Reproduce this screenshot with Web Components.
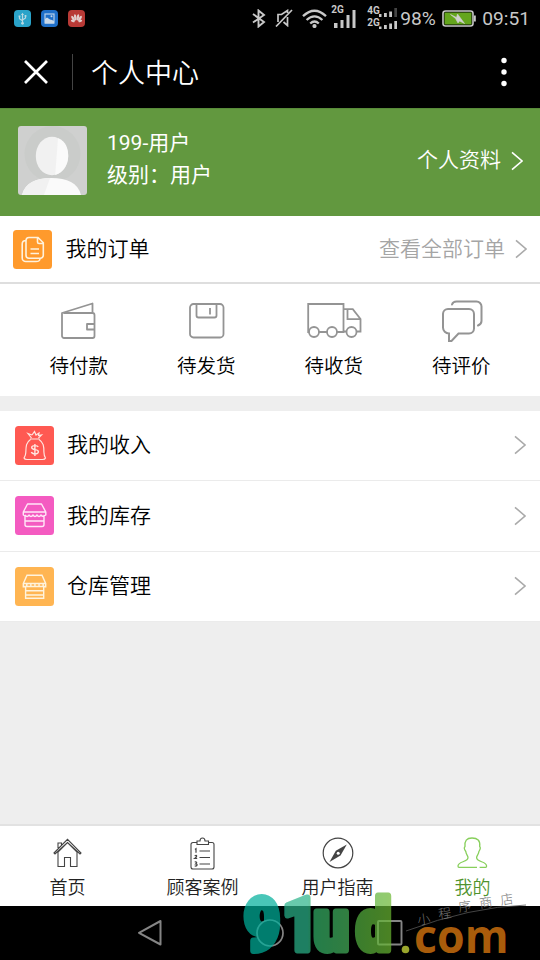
<!DOCTYPE html>
<html lang="zh-CN">
<head>
<meta charset="utf-8">
<title>个人中心</title>
<style>
html,body{margin:0;padding:0}
body{width:540px;height:960px;overflow:hidden;background:#eee;font-family:Roboto,"Noto Sans CJK SC",sans-serif;color:#000}
</style>
</head>
<body>
<member-page></member-page>
<script>
const define = (name, html) => customElements.define(name, class extends HTMLElement {
  connectedCallback() {
    if (this.shadowRoot) return;
    const t = document.createElement('template');
    t.innerHTML = typeof html === 'function' ? html(this) : html;
    this.attachShadow({mode: 'open'}).append(t.content.cloneNode(true));
  }
});

// name: [width, height, markup]
const ICONS = {
  usb: [17,17,'<rect width="17" height="17" rx="4" fill="#2aa3c9"/><g stroke="#b9d9e2" fill="none" stroke-width="1.2"><path d="M8.5 4v9M5.5 6.5v2.3l3 2M11.5 6v2l-3 2"/></g><circle cx="8.5" cy="13.3" r="1.4" fill="#b9d9e2"/><path d="M7 5l1.500-2.300L10 5zM4.600 5.500h1.800v1.800H4.600zM10.600 5h1.800v1.800h-1.800z" fill="#b9d9e2"/>'],
  photo: [17,17,'<rect width="17" height="17" rx="4" fill="#1f6fc8"/><rect x="4" y="4" width="9" height="9" fill="none" stroke="#b7cfe8" stroke-width="1.200"/><path d="M4 9l2-1.500 3 2 2 .5 2 1v2.500H4z" fill="#c8d8e8"/><circle cx="10.500" cy="6.300" r="1" fill="#c8d8e8"/>'],
  flower: [17,17,'<rect width="17" height="17" rx="4" fill="#b83a36"/><g fill="#e2cfce"><ellipse cx="7.300" cy="7.400" rx="1.200" ry="3.200" transform="rotate(-8 7.300 7.400)"/><ellipse cx="9.900" cy="7.400" rx="1.200" ry="3.200" transform="rotate(8 9.900 7.400)"/><ellipse cx="5.100" cy="8.500" rx="1.200" ry="3" transform="rotate(-33 5.100 8.500)"/><ellipse cx="12" cy="8.500" rx="1.200" ry="3" transform="rotate(33 12 8.500)"/><ellipse cx="4.800" cy="11" rx="1" ry="2" transform="rotate(-68 4.800 11)"/><ellipse cx="12.300" cy="11" rx="1" ry="2" transform="rotate(68 12.300 11)"/></g>'],
  bluetooth: [14,19,'<path d="M1 5l11 8-5.500 4.500V1.500L12 6 1 13.500" fill="none" stroke="#c8c8c8" stroke-width="1.900"/>'],
  mute: [18,18,'<g fill="none" stroke="#c8c8c8" stroke-width="1.700"><path d="M3 13V5.500h3.500L12.500 1.500V4M12.500 8v8.500l-4-3.500M1 17.500L17 1"/></g>'],
  wifi: [25,19,'<g fill="none" stroke="#c8c8c8" stroke-width="2.300"><path d="M1 7.200Q12.500-3.800 24 7.200M4.600 11Q12.500 3.800 20.400 11M8.200 14.500Q12.500 10.600 16.800 14.500"/></g><circle cx="12.500" cy="17" r="2.100" fill="#c8c8c8"/>'],
  signal: [22,19,'<path d="M0 14h3.500v5H0zM6.500 11H9.500v8H6.500zM12.500 6H15.500v13H12.500zM18.500 1H21.500v18H18.500z" fill="#c8c8c8"/>'],
  dual: [19,22,'<path d="M0 6h2.500v3H0zM5 5h2.800v4H5zM10.200 3.500h2.800v5.500h-2.800zM0 18.500h2.500V21H0zM5 17h2.800v4H5zM10.200 15.500h2.800V21h-2.800zM15.300 13h2.700v8h-2.700z" fill="#c8c8c8"/><path d="M15.300 0h2.700v9h-2.700z" fill="#444"/>'],
  battery: [34,17,'<rect x="1" y="1" width="30" height="15" rx="2.500" fill="#000" stroke="#c8c8c8" stroke-width="1.600"/><rect x="2.500" y="2.500" width="27" height="12" fill="#64a51d"/><path d="M32 5.500h1.800v6H32z" fill="#c8c8c8"/><path d="M8.500 4.500l6 3L15.500 4l7 9.500-5-2.500-1.500 2-2.500-4.500z" fill="#d0d0d0" stroke="#d0d0d0" stroke-width=".6"/>'],
  close: [24,24,'<path d="M1 1l22 22M23 1L1 23" stroke="#fff" stroke-width="2.700"/>'],
  more: [6,30,'<g fill="#fff"><circle cx="3" cy="3.500" r="2.700"/><circle cx="3" cy="15" r="2.700"/><circle cx="3" cy="26.500" r="2.700"/></g>'],
  chevron: [12,20,'<path d="M1 1.300L11 10 1 18.700" fill="none" stroke="currentColor" stroke-width="1.600"/>'],
  avatar: [69,69,'<defs><clipPath id="c"><rect width="69" height="69" rx="3"/></clipPath></defs><g clip-path="url(#c)"><rect width="69" height="69" fill="#cfd0cf"/><circle cx="34.500" cy="28" r="28" fill="#caccca"/><ellipse cx="34" cy="30" rx="16.200" ry="19.300" fill="#f1f1f1"/><path d="M40 12.200C48 15 50.200 23 50.200 30c0 9-6 17.300-13 19z" fill="#fafafa"/><path d="M4 69c3-12 14-17 29.500-17S60 57 63 69z" fill="#fafafa"/><path d="M4 69c3-12 14-17 28-17l-6 17z" fill="#f1f1f1"/></g>'],
  orders: [39,39,'<rect width="39" height="39" rx="3.500" fill="#ff9a2c"/><g fill="none" stroke="#fff2dd" stroke-width="1.600"><path d="M16 7.500H25l5.300 5.300v12.400a3 3 0 0 1-3 3H16a3 3 0 0 1-3-3V10.500a3 3 0 0 1 3-3zM24.500 8v4a1.500 1.500 0 0 0 1.500 1.500h4M13 10.500c-3 0-3.800 1-3.800 3.500v14a3.500 3.500 0 0 0 3.500 3.500H23c3 0 4-.700 4-3.500M17.500 19h8.500M17.500 23.500h8.500"/></g>'],
  income: [39,39,'<rect width="39" height="39" rx="3.500" fill="#ff5952"/><g fill="none" stroke="#ffe5df" stroke-width="1.200"><path d="M16.500 12l-3.500-4.500 4 1.500M17 9l2.500-3.500L21 9l3-2-.5 2.500 3-.5-3 3M15 13h9.500M15.500 13.500c-4.500 3-4.500 7-4.700 13-.1 3-1 4-1.800 5.500.5 1.500 1.500 1.500 3 1.500h15.500c1.500 0 2.500 0 3-1.500-1-1.500-1.500-3-1.600-6 0-6-.4-9.500-4.900-12.500"/><path d="M19.900 18v12M23.200 20.900c-.6-1.500-6.500-2-6.500.5 0 3 6.700 1.500 6.700 4.300 0 3-6.300 2.600-7 .3" stroke-width="1.400"/></g>'],
  stock: [39,39,'<rect width="39" height="39" rx="3.500" fill="#f45bc1"/><g fill="none" stroke="#ffe8f7" stroke-width="1.400" stroke-linejoin="round"><path d="M8.300 16L12.500 8h14l4.300 8v3l-1.800 1v8.500a2 2 0 0 1-2 2H12a2 2 0 0 1-2-2V20l-1.700-1zM8.300 16h22.500M10 19q2.200 3 4 0 2 3 4 0 2 3 4 0 2 3 4 0 2 2.500 3.500 0M10 25h19"/></g>'],
  depot: [39,39,'<rect width="39" height="39" rx="3.500" fill="#ffb552"/><g fill="none" stroke="#fff3dd" stroke-width="1.400"><path d="M8.300 16.500L12 8.300h15l3.700 8.200v3.200H28.700v11.500H10.600V19.700H8.300zM8.300 16.500h22.400M8.300 19.500h22.400M10.600 23.700h18M10.600 28h18"/><path d="M11 18h19" stroke-width="3" stroke-dasharray="1.500 2.600"/></g>'],
  wallet: [36,38,'<g fill="none" stroke="#949494" stroke-width="1.800" stroke-linejoin="round"><path d="M2.500 11h29a2 2 0 0 1 2 2V34a2 2 0 0 1-2 2H3a2 2 0 0 1-2-2V11L31.500 1.500V11M33.500 22H26v5.500h7.500"/></g>'],
  disk: [36,36,'<g fill="none" stroke="#949494" stroke-width="1.800"><rect x="1" y="1" width="33.500" height="33.500" rx="3.500"/><path d="M7.500 1v11.500a2 2 0 0 0 2 2h16a2 2 0 0 0 2-2V1M21 5v6.500"/></g>'],
  truck: [55,36,'<g fill="none" stroke="#949494" stroke-width="1.800"><path d="M2.500 29H1.200V1H36.500v28H30M20 29H12M36.500 6.200h9.300L53.500 16v12.500h-3.500M40 28.500h-4M40.500 6.200v10h13"/><circle cx="7" cy="29" r="5"/><circle cx="25" cy="29" r="5"/><circle cx="44.500" cy="29" r="5"/></g>'],
  comment: [42,42,'<g fill="none" stroke="#949494" stroke-width="2" stroke-linecap="round"><path d="M7 9h21a5 5 0 0 1 5 5v14.500a5 5 0 0 1-5 5H17.500L10.500 41H8v-7.500a6 6 0 0 1-6-6V14a5 5 0 0 1 5-5zM11 4.500Q12 1.500 15.500 1.500h20a5 5 0 0 1 5 5V21q0 3-3.500 4.500"/></g>'],
  home: [29,30,'<g fill="none" stroke="#444" stroke-width="1.100"><path d="M1 15L14.500 1.300 28 15l-1 1L14.500 4.500 2 16zM5 10V5h3.500v2M5 14v14.500h6.500v-9h6v9H24V14L14.500 4.500z"/></g>'],
  clipboard: [25,33,'<g fill="none" stroke="#444" stroke-width="1.100"><path d="M7 5.500H3a2 2 0 0 0-2 2v22.500a2 2 0 0 0 2 2h19a2 2 0 0 0 2-2V7.500a2 2 0 0 0-2-2h-4M7 7.500h11.500V4H15q0-3-2.500-3T10 4H7zM9.500 14H20M9.500 20.500H20M9.500 27H20"/><g stroke-width="1.200"><path d="M5 12.500l1-.8v4M4.700 19q1.800-1.500 2 0 0 1-2 2.500h2.500M4.700 25q2.200-.5 2 1l-1 1q2 0 1.200 1.500-1 1-2.200.3"/></g></g>'],
  compass: [32,32,'<circle cx="16" cy="16" r="14.800" fill="none" stroke="#444" stroke-width="1.200"/><path d="M24.800 7.500L18.500 18.500 7.500 25l6.300-11.200z" fill="#444"/><circle cx="16.200" cy="16.200" r="1.500" fill="#fff"/>'],
  person: [31,32,'<path d="M20 30.300H2Q1 30.300 1 29c0-5 10-3.500 10-8.500 0-2-2-3-2.200-6-1.500-2-1.800-4-.8-5C7.500 4 9.500 1 15 1s8.500 2.500 7.700 8.500c1 1 .5 3-.8 5-.2 3-2.300 4-2.300 6 0 5 10 3.500 10 8.500q0 1.300-1 1.300h-6" fill="none" stroke="#87cf5b" stroke-width="1.300"/>'],
  back: [26,28,'<path d="M23.500 2v23.500L2 13.800z" fill="none" stroke="#858585" stroke-width="2" stroke-linejoin="round"/>'],
  circle: [28,28,'<circle cx="14" cy="14" r="13" fill="none" stroke="#858585" stroke-width="1.700"/>'],
  square: [26,26,'<rect x="1" y="1" width="23.500" height="23.500" rx="1" fill="none" stroke="#858585" stroke-width="1.900"/>']
};
define('ui-icon', el => {
  const [w, h, body] = ICONS[el.getAttribute('name')];
  return `<style>:host{display:block;flex:none;width:${w}px;height:${h}px}svg{display:block}</style><svg width="${w}" height="${h}" viewBox="0 0 ${w} ${h}">${body}</svg>`;
});

define('status-bar', `<style>
:host{display:flex;height:36px;background:#000;color:#c8c8c8;align-items:center;padding:0 10px 0 14px;box-sizing:border-box;font-size:19.200px}
.apps{display:flex;gap:10px;margin-right:auto}
.sys{display:flex;align-items:center}
.net{font-size:10px;line-height:10px;font-weight:700}
</style>
<div class="apps"><ui-icon name="usb"></ui-icon><ui-icon name="photo"></ui-icon><ui-icon name="flower"></ui-icon></div>
<div class="sys"><ui-icon name="bluetooth"></ui-icon><ui-icon name="mute" style="margin-left:9px"></ui-icon><ui-icon name="wifi" style="margin-left:9px"></ui-icon>
<span class="net" style="margin:-16px 0 0 4px;width:13px">2G</span><ui-icon name="signal" style="margin-left:-10px"></ui-icon>
<span class="net" style="margin:-3px 0 0 11px;width:13px;line-height:12px">4G<br>2G</span><ui-icon name="dual" style="margin:2px 0 0 -1px"></ui-icon>
<span style="margin-left:2px;width:36px">98%</span><ui-icon name="battery" style="margin-left:6px"></ui-icon><span style="margin-left:6px">09:51</span></div>`);

define('title-bar', `<style>
:host{display:flex;height:72px;background:#000;color:#fff;align-items:center;padding:0 33px 0 24px;box-sizing:border-box}
i{width:1px;height:36px;background:#444;margin:0 18px 0 24px}
h1{font-size:27px;line-height:36px;font-weight:350;margin:3px 0 0;flex:1}
</style><ui-icon name="close"></ui-icon><i></i><h1><slot></slot></h1><ui-icon name="more"></ui-icon>`);

define('user-header', `<style>
:host{display:flex;height:108px;background:#62983f;color:#fff;align-items:center;box-sizing:border-box;padding:0 17px 0 18px;font-size:21px;font-weight:400;box-shadow:inset 0 1px #588b39}
.who{flex:1;margin:-6px 0 0 20px;line-height:32px}
.link{margin:-8px 10px 0 0;font-weight:350}
</style><ui-icon name="avatar" style="margin-top:-3px"></ui-icon><div class="who"><slot name="name"></slot><slot name="level"></slot></div><span class="link"><slot></slot></span><ui-icon name="chevron" style="margin-top:-3px"></ui-icon>`);

define('menu-row', `<style>
:host{display:flex;height:70.500px;box-sizing:border-box;align-items:center;background:#fff;padding:0 14px 0 15px;font-size:21px;font-weight:350;border-bottom:1.500px solid #ebebeb}
:host([head]){height:68px;padding:0 13px 0 13.400px;border-bottom:2px solid #dedede}
.label{flex:1;margin:-4px 0 0 13px}
.more{color:#a5a5a5;margin:-4px 10px 0 0}
ui-icon[name=chevron]{color:#aaa}
</style><slot name="icon"></slot><span class="label"><slot></slot></span><span class="more"><slot name="more"></slot></span><ui-icon name="chevron"></ui-icon>`);

define('order-grid', `<style>:host{display:grid;grid-template-columns:repeat(4,127.500px);padding:0 15px;height:112px;background:#fff}</style><slot></slot>`);
define('order-state', el => `<style>
:host{display:flex;flex-direction:column;align-items:center;font-size:19.500px;font-weight:350}
.pic{height:68px;display:flex;align-items:center;padding:5px 0 0 1px;box-sizing:border-box}
span{line-height:30px}
</style><div class="pic"><ui-icon name="${el.getAttribute('icon')}"></ui-icon></div><span><slot></slot></span>`);

define('tab-bar', `<style>:host{display:grid;grid-template-columns:repeat(4,1fr);height:82px;background:#fff;border-top:2px solid #e2e2e2;box-sizing:border-box}</style><slot></slot>`);
define('tab-item', el => `<style>
:host{display:flex;flex-direction:column;align-items:center;font-size:18px;font-weight:350;color:#222}
:host([active]){color:#4f932d}
.pic{height:49px;display:flex;align-items:center;padding-top:5px;box-sizing:border-box}
span{line-height:26px}
</style><div class="pic"><ui-icon name="${el.getAttribute('icon')}"></ui-icon></div><span><slot></slot></span>`);

define('nav-bar', `<style>:host{display:flex;height:54px;background:#000;align-items:center;justify-content:space-between;padding:0 137px;box-sizing:border-box}</style><ui-icon name="back"></ui-icon><ui-icon name="circle"></ui-icon><ui-icon name="square"></ui-icon>`);

define('site-mark', `<style>:host{position:absolute;left:240px;top:888px;width:300px;height:72px}svg{display:block;overflow:visible}</style>
<svg width="300" height="72" viewBox="240 888 300 72">
<defs><linearGradient id="g" gradientUnits="userSpaceOnUse" x1="286" y1="0" x2="462" y2="0"><stop offset="0" stop-color="#00b09c"/><stop offset=".25" stop-color="#00b09c"/><stop offset=".29" stop-color="#2bb48b"/><stop offset=".43" stop-color="#2bb48b"/><stop offset=".47" stop-color="#32b069"/><stop offset=".7" stop-color="#46b25b"/><stop offset=".76" stop-color="#52b040"/><stop offset="1" stop-color="#6cb832"/></linearGradient></defs>
<g opacity=".71"><text transform="scale(.85 1)" y="950.500" x="287 332 369 419" font-family="Roboto" font-weight="900" font-size="73" fill="url(#g)" stroke="url(#g)" stroke-width="7" stroke-linejoin="round">91ud</text></g>
<circle cx="405.500" cy="949.500" r="3.800" fill="#9aa62c"/>
<text x="414" y="953" textLength="94.500" lengthAdjust="spacingAndGlyphs" font-family="Open Sans" font-weight="700" font-size="46.500" fill="#a95c0b">com</text>
<path d="M406 931Q470 907 526 905" fill="none" stroke="#555" stroke-width=".8"/>
<text x="418 439 459 480 501" y="925 919 912 908 905" rotate="-8" font-size="13" font-weight="300" fill="#777" font-family="Noto Sans CJK SC">小程序商店</text>
</svg>`);

define('member-page', `<style>
:host{display:flex;flex-direction:column;position:relative;width:540px;height:960px;background:#eee;overflow:hidden}
.menu{margin-top:14.500px;background:#fff}
tab-bar{margin-top:auto}
.line{display:block}
</style>
<status-bar></status-bar>
<title-bar>个人中心</title-bar>
<user-header><span class="line" slot="name">199-用户</span><span class="line" slot="level">级别：用户</span>个人资料</user-header>
<menu-row head><ui-icon slot="icon" name="orders"></ui-icon>我的订单<span slot="more">查看全部订单</span></menu-row>
<order-grid><order-state icon="wallet">待付款</order-state><order-state icon="disk">待发货</order-state><order-state icon="truck">待收货</order-state><order-state icon="comment">待评价</order-state></order-grid>
<div class="menu">
<menu-row><ui-icon slot="icon" name="income"></ui-icon>我的收入</menu-row>
<menu-row><ui-icon slot="icon" name="stock"></ui-icon>我的库存</menu-row>
<menu-row><ui-icon slot="icon" name="depot"></ui-icon>仓库管理</menu-row>
</div>
<tab-bar><tab-item icon="home">首页</tab-item><tab-item icon="clipboard">顾客案例</tab-item><tab-item icon="compass">用户指南</tab-item><tab-item icon="person" active>我的</tab-item></tab-bar>
<nav-bar></nav-bar>
<site-mark></site-mark>`);
</script>
</body>
</html>
